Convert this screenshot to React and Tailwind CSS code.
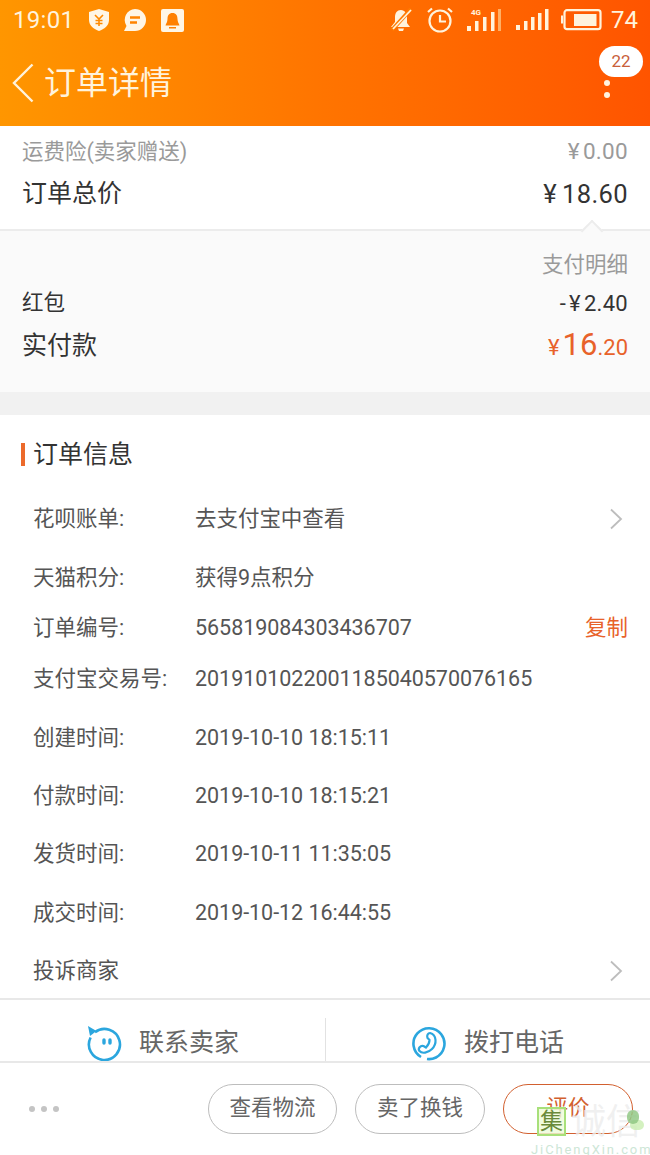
import React from 'react';

const font = { fontFamily: 'Roboto, "Noto Sans CJK SC", sans-serif' };

const rows = [
  { label: '花呗账单:', value: '去支付宝中查看', h: 'h-[58px]', chevron: true },
  { label: '天猫积分:', value: '获得9点积分', h: 'h-[60px]' },
  { label: '订单编号:', value: '565819084303436707', h: 'h-[40px]', copy: true },
  { label: '支付宝交易号:', value: '2019101022001185040570076165', h: 'h-[62px]' },
  { label: '创建时间:', value: '2019-10-10 18:15:11', h: 'h-[56px]' },
  { label: '付款时间:', value: '2019-10-10 18:15:21', h: 'h-[60px]' },
  { label: '发货时间:', value: '2019-10-11 11:35:05', h: 'h-[56px]' },
  { label: '成交时间:', value: '2019-10-12 16:44:55', h: 'h-[62px]' },
];

function Chevron() {
  return (
    <svg width="14" height="22" viewBox="0 0 14 22" fill="none" stroke="#bdbdbd" strokeWidth="1.8">
      <path d="M2 1.5 L12 11 L2 20.5" />
    </svg>
  );
}

function StatusBar() {
  return (
    <div className="h-[40px] flex items-center pl-[13px] pr-[12px] text-white">
      <span className="text-[24px] leading-none tracking-[0.3px] text-[#fff3dc]">19:01</span>
      <svg className="ml-[14px]" width="22" height="24" viewBox="0 0 22 24" fill="#fff6e6">
        <path d="M11 1 L21 4 V12 C21 18 16 21 11 23 C6 21 1 18 1 12 V4 Z" />
        <path d="M7 7 L11 11 L15 7 M11 11 V18 M7.5 12.5 H14.5 M7.5 15.5 H14.5" stroke="#ff8a00" strokeWidth="1.6" fill="none" />
      </svg>
      <svg className="ml-[13px]" width="24" height="24" viewBox="0 0 24 24" fill="#fff6e6">
        <path d="M12 1 A11 11 0 1 1 12 23 H1 L3.5 18 A11 11 0 0 1 12 1 Z" />
        <path d="M7 9.5 H17 M7 14.5 H14" stroke="#ff8400" strokeWidth="2.4" />
      </svg>
      <svg className="ml-[14px]" width="23" height="23" viewBox="0 0 23 23">
        <rect width="23" height="23" rx="2" fill="#fff6e6" />
        <path d="M11.5 4 C8 4 6.5 6.5 6.5 10 C6.5 13 5 14.5 4.5 16.5 H18.5 C18 14.5 16.5 13 16.5 10 C16.5 6.5 15 4 11.5 4 Z M8 18 H15 V19.5 H8 Z" fill="#ff8000" />
      </svg>
      <div className="flex-1" />
      <svg width="23" height="24" viewBox="0 0 23 24" fill="#fff3dc">
        <path d="M11 2 C7 2 5 5 5 9 V14 L1 19 H20 L17 15 V8 C16 4 14 2 11 2 Z M8 20.5 H14 L13 23 H9 Z" />
        <path d="M21 1 L2 22" stroke="#ff7a00" strokeWidth="4" />
        <path d="M21 2 L3 21" stroke="#fff3dc" strokeWidth="1.8" />
      </svg>
      <svg className="ml-[14px]" width="26" height="26" viewBox="0 0 26 26" fill="none" stroke="#fff3dc" strokeWidth="2.2">
        <circle cx="13" cy="14" r="10.5" />
        <path d="M13 8 V14.5 H19" />
        <path d="M1 5 L5 1.5 M25 5 L21 1.5" />
      </svg>
      <svg className="ml-[14px]" width="34" height="24" viewBox="0 0 34 24" fill="#fff3dc">
        <text x="4" y="7" fontSize="8" fontFamily="Roboto" fontWeight="700">4G</text>
        <rect x="0" y="18" width="4" height="5" />
        <rect x="8" y="13" width="3.5" height="10" />
        <rect x="16" y="9" width="3.5" height="14" />
        <rect x="24" y="4" width="3.5" height="19" />
        <rect x="31" y="1" width="3" height="22" fill="#ffb066" />
      </svg>
      <svg className="ml-[15px]" width="33" height="22" viewBox="0 0 33 22" fill="#fff3dc">
        <rect x="0" y="16" width="4" height="5" />
        <rect x="8" y="12" width="3.5" height="9" />
        <rect x="15" y="8" width="3.5" height="13" />
        <rect x="22" y="4" width="3.5" height="17" />
        <rect x="29" y="0" width="3.5" height="21" />
      </svg>
      <svg className="ml-[12px]" width="41" height="22" viewBox="0 0 41 22" fill="none">
        <rect x="3.5" y="1.2" width="36" height="19" rx="2.5" stroke="#fff3dc" strokeWidth="2.2" />
        <rect x="0" y="6.5" width="2" height="8" fill="#fff3dc" />
        <rect x="13" y="5" width="22.5" height="12" fill="#fff3dc" />
      </svg>
      <span className="ml-[9px] text-[24px] leading-none text-[#fff3dc]">74</span>
    </div>
  );
}

function Header() {
  return (
    <div className="relative h-[126px] shrink-0 bg-gradient-to-r from-[#ff9600] via-[#ff7400] to-[#ff5400]">
      <StatusBar />
      <div className="h-[86px] flex items-center pl-[12px]">
        <svg width="22" height="40" viewBox="0 0 22 40" fill="none" stroke="#fff3dc" strokeWidth="2.4">
          <path d="M20.5 1.5 L2 20 L20.5 38.5" />
        </svg>
        <span className="ml-[10px] text-[32px] leading-none text-[#fff3dc]">订单详情</span>
      </div>
      <div className="absolute left-[599px] top-[46px] w-[44px] h-[31px] rounded-full bg-white flex items-center justify-center text-[17px] text-[#c9603a]">
        22
      </div>
      <div className="absolute left-[604px] top-[80px] flex flex-col gap-[6px]">
        <div className="w-[6px] h-[6px] rounded-full bg-[#fff3e0]" />
        <div className="w-[6px] h-[6px] rounded-full bg-[#fff3e0]" />
      </div>
    </div>
  );
}

function Summary() {
  return (
    <div className="h-[105px] shrink-0 bg-white px-[22px] pt-[13px] border-b-2 border-[#ececec]">
      <div className="flex items-center justify-between h-[26px] text-[21.5px] text-[#9a9a9a]">
        <span>运费险(卖家赠送)</span>
        <span className="text-[22.5px] tracking-[0.3px]"><span className="mr-[3px]">¥</span>0.00</span>
      </div>
      <div className="flex items-center justify-between h-[32px] mt-[13px] text-[#333]">
        <span className="text-[25px]">订单总价</span>
        <span className="text-[25.5px] tracking-[0.4px]"><span className="mr-[5px]">¥</span>18.60</span>
      </div>
    </div>
  );
}

function Payment() {
  return (
    <div className="relative h-[161px] shrink-0 bg-[#fafafa] px-[22px] pt-[20px]">
      <div className="absolute left-[584px] top-[-8px] w-[16px] h-[16px] rotate-45 bg-[#fafafa] border-l-2 border-t-2 border-[#ececec]" />
      <div className="text-right text-[21.5px] leading-[28px] text-[#9a9a9a]">支付明细</div>
      <div className="flex items-center justify-between h-[28px] mt-[10px] text-[#333]">
        <span className="text-[21.5px]">红包</span>
        <span className="text-[22px] tracking-[0.3px]">-<span className="mx-[3px]">¥</span>2.40</span>
      </div>
      <div className="flex items-center justify-between h-[36px] mt-[11px]">
        <span className="text-[25px] text-[#333]">实付款</span>
        <span className="text-[#e8622a] flex items-baseline">
          <span className="text-[22px] mr-[3px]">¥</span>
          <span className="text-[31px] leading-none">16</span>
          <span className="text-[22px] leading-none">.20</span>
        </span>
      </div>
    </div>
  );
}

function OrderInfo() {
  return (
    <div className="h-[583px] shrink-0 bg-white">
      <div className="flex items-center h-[75px] pl-[21px] pt-[4px]">
        <div className="w-[4px] h-[23px] bg-[#ec6a2b]" />
        <span className="ml-[8px] text-[25px] text-[#333]">订单信息</span>
      </div>
      {rows.map((row) => (
        <div key={row.label} className={`${row.h} flex items-center pl-[33px] pr-[22px] text-[#555]`}>
          <span className="w-[162px] shrink-0 text-[21.5px]">{row.label}</span>
          <span className="flex-1 text-[21.5px] tracking-[-0.04px]">{row.value}</span>
          {row.chevron && <span className="mr-[5px]"><Chevron /></span>}
          {row.copy && <span className="text-[21.5px] text-[#e8622a]">复制</span>}
        </div>
      ))}
      <div className="h-[54px] flex items-center justify-between pl-[33px] pr-[27px] text-[21.5px] text-[#555]">
        <span>投诉商家</span>
        <Chevron />
      </div>
    </div>
  );
}

function Contact() {
  return (
    <div className="h-[65px] shrink-0 bg-white border-t-2 border-b-2 border-[#e8e8e8] flex">
      <div className="w-[326px] mt-[18px] pt-[7px] pl-[87px] flex items-center border-r border-[#e2e2e2]">
        <svg width="35" height="35" viewBox="0 0 35 35" fill="none" stroke="#2ba6de" strokeWidth="2.6">
          <path d="M8 6.2 A15.5 15.5 0 1 1 3.6 11.5" />
          <path d="M1 0 L9.5 5 L3 10 Z" fill="#2ba6de" stroke="none" />
          <path d="M17 14 V17 M23 14 V17" strokeWidth="3.4" strokeLinecap="round" />
        </svg>
        <span className="ml-[17px] text-[25px] text-[#666]">联系卖家</span>
      </div>
      <div className="flex-1 mt-[18px] pt-[7px] pl-[86px] flex items-center">
        <svg width="35" height="35" viewBox="0 0 35 35" fill="none" stroke="#2ba6de" strokeWidth="2.6">
          <path d="M9 31 A15.5 15.5 0 1 1 24 31.5 A15.5 15.5 0 0 1 15 33" />
          <path d="M18 7 C25 9 25 18 20 23 C16 27 10 28 7.5 25 C5.5 22.5 8.5 19 11.5 20 L14 21.5 C16 19.5 17.5 17 17.5 14 L15.5 12 C14.5 9.5 16 7 18 7 Z" strokeWidth="2.2" />
        </svg>
        <span className="ml-[17px] text-[25px] text-[#666]">拨打电话</span>
      </div>
    </div>
  );
}

function BottomBar() {
  return (
    <div className="relative flex-1 bg-white flex items-center pl-[29px] pb-[1px]">
      <div className="flex gap-[6px]">
        <div className="w-[6px] h-[6px] rounded-full bg-[#c4c4c4]" />
        <div className="w-[6px] h-[6px] rounded-full bg-[#c4c4c4]" />
        <div className="w-[6px] h-[6px] rounded-full bg-[#c4c4c4]" />
      </div>
      <div className="ml-auto mr-[17px] flex gap-[18px]">
        <div className="w-[129px] h-[50px] rounded-full border border-[#bdbdbd] flex items-center justify-center text-[21.5px] text-[#666]">查看物流</div>
        <div className="w-[130px] h-[50px] rounded-full border border-[#bdbdbd] flex items-center justify-center text-[21.5px] text-[#666]">卖了换钱</div>
        <div className="w-[130px] h-[50px] rounded-full border-[1.5px] border-[#d2602f] flex items-center justify-center text-[21.5px] text-[#d2602f]">评价</div>
      </div>
      <div className="absolute left-[537px] top-[44px] flex items-start">
        <div className="w-[29px] h-[29px] border-[2px] border-[#a8e07a] bg-[#eefbd8]/80 flex items-center justify-center text-[23px] leading-none text-[#6a8a3a]">集</div>
        <div className="ml-[5px] -mt-[2px] text-[35px] leading-none text-[#ececec]/80">诚信</div>
      </div>
      <div className="absolute left-[630px] top-[57px] w-[14px] h-[10px] rounded-full bg-[#c9edb0]/80" />
      <div className="absolute left-[627px] top-[47px] w-[12px] h-[14px] rounded-full bg-[#8cc67f]/80" />
      <div className="absolute left-[531px] top-[80px] text-[13px] leading-none tracking-[1.9px] text-[#cde6d6]">JiChengXin.com</div>
    </div>
  );
}

export default function App() {
  return (
    <div className="w-[650px] h-[1155px] flex flex-col overflow-hidden bg-[#f1f1f1]" style={font}>
      <Header />
      <Summary />
      <Payment />
      <div className="h-[23px] shrink-0 bg-[#f1f1f1]" />
      <OrderInfo />
      <Contact />
      <BottomBar />
    </div>
  );
}
